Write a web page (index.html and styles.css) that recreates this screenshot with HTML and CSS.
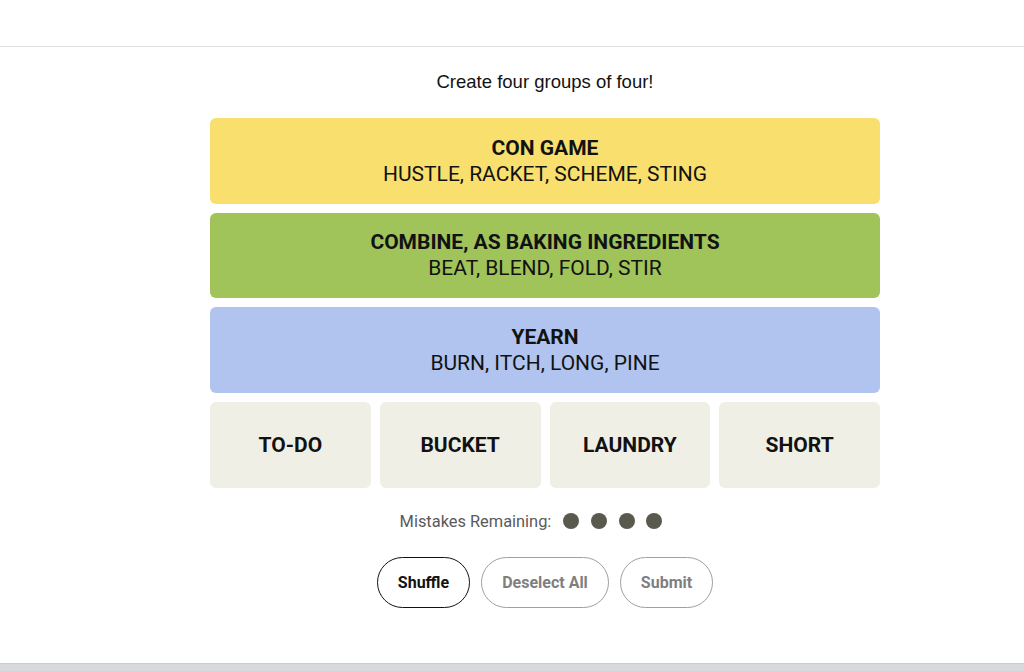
FILE: index.html
```html
<!DOCTYPE html>
<html lang="en">
<head>
  <meta charset="UTF-8">
  <meta name="viewport" content="width=device-width, initial-scale=1.0">
  <title>Connections</title>
  <link rel="stylesheet" href="styles.css">
</head>
<body>
  <header class="top-bar"></header>

  <main class="game">
    <p class="instructions">Create four groups of four!</p>

    <div class="board">
      <div class="solved yellow">
        <h3>CON GAME</h3>
        <p>HUSTLE, RACKET, SCHEME, STING</p>
      </div>
      <div class="solved green">
        <h3>COMBINE, AS BAKING INGREDIENTS</h3>
        <p>BEAT, BLEND, FOLD, STIR</p>
      </div>
      <div class="solved blue">
        <h3>YEARN</h3>
        <p>BURN, ITCH, LONG, PINE</p>
      </div>
      <div class="tile-row">
        <button class="tile">TO-DO</button>
        <button class="tile">BUCKET</button>
        <button class="tile">LAUNDRY</button>
        <button class="tile">SHORT</button>
      </div>
    </div>

    <div class="mistakes">
      <span>Mistakes Remaining:</span>
      <div class="dots">
        <span class="dot"></span>
        <span class="dot"></span>
        <span class="dot"></span>
        <span class="dot"></span>
      </div>
    </div>

    <div class="controls">
      <button class="pill active">Shuffle</button>
      <button class="pill">Deselect All</button>
      <button class="pill">Submit</button>
    </div>
  </main>

  <footer class="bottom-bar"></footer>
</body>
</html>
```

FILE: styles.css
```css
:root {
  --text: #121212;
  --muted: #5a5a5a;
  --tile: #efefe6;
  --yellow: #f9df6d;
  --green: #a0c35a;
  --blue: #b0c4ef;
  --dot: #5a594e;
}

* {
  margin: 0;
  padding: 0;
  box-sizing: border-box;
}

body {
  font-family: Roboto, 'Liberation Sans', sans-serif;
  background: #fff;
  color: var(--text);
  height: 671px;
  overflow: hidden;
  display: flex;
  flex-direction: column;
}

.top-bar {
  height: 47px;
  border-bottom: 1px solid #e2e2e2;
}

.game {
  flex: 1;
  width: 670px;
  margin-left: 210px;
  display: flex;
  flex-direction: column;
  align-items: center;
}

.instructions {
  font-family: 'Liberation Sans Narrow', 'Liberation Sans', sans-serif;
  font-size: 18.5px;
  margin-top: 23px;
  height: 24px;
  line-height: 24px;
}

.board {
  width: 100%;
  margin-top: 24px;
  display: flex;
  flex-direction: column;
  gap: 9px;
}

.solved {
  height: 85.67px;
  border-radius: 6px;
  display: flex;
  flex-direction: column;
  align-items: center;
  justify-content: center;
  text-align: center;
}

.solved h3 {
  font-size: 21px;
  font-weight: 700;
  line-height: 26px;
}

.solved p {
  font-size: 21px;
  line-height: 26px;
}

.yellow { background: var(--yellow); }
.green { background: var(--green); }
.blue { background: var(--blue); }

.tile-row {
  display: grid;
  grid-template-columns: repeat(4, 1fr);
  gap: 9px;
}

.tile {
  height: 85.67px;
  border: none;
  border-radius: 6px;
  background: var(--tile);
  color: var(--text);
  font-family: Roboto, 'Liberation Sans', sans-serif;
  font-size: 21px;
  font-weight: 700;
}

.mistakes {
  margin-top: 24px;
  margin-right: 28px;
  display: flex;
  align-items: center;
  gap: 12px;
  font-size: 16.4px;
  color: var(--muted);
}

.dots {
  display: flex;
  gap: 11.7px;
}

.dot {
  width: 16px;
  height: 16px;
  border-radius: 50%;
  background: var(--dot);
}

.controls {
  margin-top: 26px;
  display: flex;
  gap: 11px;
}

.pill {
  height: 51px;
  padding: 0 20px;
  border-radius: 32px;
  border: 1px solid #a0a0a0;
  background: #fff;
  color: #7f7f7f;
  font-family: Roboto, 'Liberation Sans', sans-serif;
  font-size: 16px;
  font-weight: 700;
}

.pill.active {
  border-color: #121212;
  color: #121212;
}

.bottom-bar {
  height: 8px;
  background: #d8d9dc;
  border-top: 1px solid #cdcdcd;
}
```
